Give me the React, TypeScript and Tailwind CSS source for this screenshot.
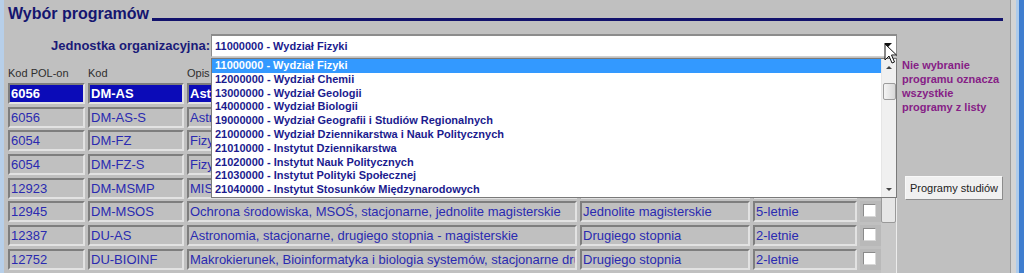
import React from "react";

type Row = { pol: string; kod: string; opis: string; typ: string; dl: string; sel?: boolean };

const rows: Row[] = [
  { pol: "6056", kod: "DM-AS", opis: "Astronomia, stacjonarne, jednolite magisterskie", typ: "Jednolite magisterskie", dl: "5-letnie", sel: true },
  { pol: "6056", kod: "DM-AS-S", opis: "Astronomia, stacjonarne, jednolite magisterskie, specjalność", typ: "Jednolite magisterskie", dl: "5-letnie" },
  { pol: "6054", kod: "DM-FZ", opis: "Fizyka, stacjonarne, jednolite magisterskie", typ: "Jednolite magisterskie", dl: "5-letnie" },
  { pol: "6054", kod: "DM-FZ-S", opis: "Fizyka, stacjonarne, jednolite magisterskie, specjalność", typ: "Jednolite magisterskie", dl: "5-letnie" },
  { pol: "12923", kod: "DM-MSMP", opis: "MISMaP, stacjonarne, jednolite magisterskie", typ: "Jednolite magisterskie", dl: "5-letnie" },
  { pol: "12945", kod: "DM-MSOS", opis: "Ochrona środowiska, MSOŚ, stacjonarne, jednolite magisterskie", typ: "Jednolite magisterskie", dl: "5-letnie" },
  { pol: "12387", kod: "DU-AS", opis: "Astronomia, stacjonarne, drugiego stopnia - magisterskie", typ: "Drugiego stopnia", dl: "2-letnie" },
  { pol: "12752", kod: "DU-BIOINF", opis: "Makrokierunek, Bioinformatyka i biologia systemów, stacjonarne drugiego stopnia", typ: "Drugiego stopnia", dl: "2-letnie" },
  { pol: "12753", kod: "DU-BIOL", opis: "Biologia, stacjonarne, drugiego stopnia", typ: "Drugiego stopnia", dl: "2-letnie" },
];

const options = [
  "11000000 - Wydział Fizyki",
  "12000000 - Wydział Chemii",
  "13000000 - Wydział Geologii",
  "14000000 - Wydział Biologii",
  "19000000 - Wydział Geografii i Studiów Regionalnych",
  "21000000 - Wydział Dziennikarstwa i Nauk Politycznych",
  "21010000 - Instytut Dziennikarstwa",
  "21020000 - Instytut Nauk Politycznych",
  "21030000 - Instytut Polityki Społecznej",
  "21040000 - Instytut Stosunków Międzynarodowych",
];

function Cell({ w, text, sel }: { w: string; text: string; sel?: boolean }) {
  return (
    <div
      className={`${w} h-full shrink-0 overflow-hidden whitespace-nowrap border-2 border-t-[#7e7e7e] border-l-[#7e7e7e] border-b-[#e2e2e2] border-r-[#e2e2e2] pl-[1px] text-[13px] leading-[17px] ${
        sel ? "bg-[#0b0bb8] font-bold text-white" : "bg-[#c0c0c0] text-[#2a2ab0]"
      }`}
    >
      {text}
    </div>
  );
}

export default function App() {
  return (
    <div className="flex h-[273px] w-[1024px] overflow-hidden bg-[#c0c0c0] font-['Liberation_Sans',Arial,sans-serif]">
      <div className="w-[4px] shrink-0 bg-[#b7cfe9]" />
      <div className="flex min-w-0 flex-1 flex-col">
        {/* title */}
        <div className="flex h-[20px] items-end pl-[4px] pr-[7px] mt-[4px]">
          <div className="text-[16px] font-bold leading-[20px] text-[#15156f] whitespace-nowrap">Wybór programów</div>
          <div className="ml-[3px] mb-[3px] h-[3px] flex-1 bg-[#12126c]" />
        </div>
        <div className="mt-[10px] flex flex-1">
          {/* left column */}
          <div className="flex w-[893px] shrink-0 flex-col">
            <div className="flex h-[23px]">
              <div className="w-[207px] shrink-0 pr-[1px] text-right text-[13px] font-bold leading-[23px] text-[#1a1a78]">
                Jednostka organizacyjna:
              </div>
              <div className="relative flex-1">
                <div className="h-[23px] border border-t-2 border-[#8c8c8c] border-b-[#d0d0d0] bg-white pl-[3px] text-[11px] font-bold leading-[20px] text-[#1b1b8e]">
                  11000000 - Wydział Fizyki
                </div>
                <div className="absolute left-[673px] top-[9px] h-0 w-0 border-x-[4px] border-t-[4px] border-x-transparent border-t-[#111]" />
                {/* dropdown list */}
                <div className="absolute left-0 right-0 top-[24px] z-10 flex h-[140px] border border-[#7a7a7a] bg-white">
                  <div className="flex flex-1 flex-col">
                    {options.map((o, i) => (
                      <div
                        key={o}
                        className={`h-[13.8px] whitespace-nowrap pl-[3px] text-[11px] font-bold leading-[13.8px] ${
                          i === 0 ? "bg-[#3399ff] text-white" : "text-[#1b1b8e]"
                        }`}
                      >
                        {o}
                      </div>
                    ))}
                  </div>
                  <div className="flex w-[15px] flex-col items-center border-l border-[#e6e6e6] bg-[#f0f0f0]">
                    <div className="flex h-[16px] items-center justify-center">
                      <div className="h-0 w-0 border-x-[3px] border-b-[3px] border-x-transparent border-b-[#444]" />
                    </div>
                    <div className="mt-[8px] h-[17px] w-[13px] rounded-[2px] border border-[#9c9c9c] bg-gradient-to-r from-[#f4f4f4] to-[#d8d8d8]" />
                    <div className="flex-1" />
                    <div className="flex h-[16px] items-center justify-center">
                      <div className="h-0 w-0 border-x-[3px] border-t-[3px] border-x-transparent border-t-[#444]" />
                    </div>
                  </div>
                </div>
                {/* mouse cursor */}
                <svg className="absolute left-[673px] top-[9px] z-20" width="14" height="22" viewBox="0 0 14 22">
                  <path d="M1 1 L1 17 L5 13 L8 20 L10.5 19 L7.5 12 L12.5 12 Z" fill="#fff" stroke="#111" strokeWidth="1" strokeLinejoin="round" />
                </svg>
              </div>
            </div>
            {/* table */}
            <div className="mt-[9px] flex flex-1 overflow-hidden">
              <div className="flex-1 overflow-hidden pl-[4px]">
                <div className="mb-[3px] flex h-[14px] gap-[3px] text-[11px] leading-[14px] text-[#2e2e2e]">
                  <div className="w-[77px] shrink-0">Kod POL-on</div>
                  <div className="w-[96px] shrink-0">Kod</div>
                  <div className="w-[390px] shrink-0">Opis</div>
                </div>
                <div className="flex flex-col gap-[2.7px]">
                  {rows.map((r, i) => (
                    <div key={i} className="flex h-[21px] gap-[3px]">
                      <Cell w="w-[77px]" text={r.pol} sel={r.sel} />
                      <Cell w="w-[96px]" text={r.kod} sel={r.sel} />
                      <Cell w="w-[390px]" text={r.opis} sel={r.sel} />
                      <Cell w="w-[170px]" text={r.typ} sel={r.sel} />
                      <Cell w="w-[104px]" text={r.dl} sel={r.sel} />
                      <div className="h-full w-[21px] shrink-0 bg-[#b9b9b9] pl-[3px] pt-[3px]">
                        <div className="h-[13px] w-[13px] border border-t-[#8a8a8a] border-l-[#8a8a8a] border-b-[#d8d8d8] border-r-[#d8d8d8] bg-white" />
                      </div>
                    </div>
                  ))}
                </div>
              </div>
              <div className="flex w-[16px] shrink-0 flex-col border-r border-[#ececec] bg-[#c8c8c8]">
                <div className="h-[157px] rounded-[2px] border border-[#999] bg-[#e6e6e6]" />
              </div>
            </div>
          </div>
          {/* right column */}
          <div className="flex-1 pl-[5px] pt-[24px]">
            <div className="whitespace-nowrap text-[11px] font-bold leading-[14px] text-[#862086]">
              Nie wybranie
              <br />
              programu oznacza
              <br />
              wszystkie
              <br />
              programy z listy
            </div>
            <button className="ml-[3px] mt-[62px] h-[24px] w-[98px] border border-[#f8f8f8] border-b-[#8c8c8c] border-r-[#8c8c8c] bg-[#f0f0f0] text-[11px] leading-[20px] text-[#222]">
              Programy studiów
            </button>
          </div>
        </div>
      </div>
      <div className="flex shrink-0">
        <div className="w-[1px] bg-[#9c9c9c]" />
        <div className="w-[5px] bg-[#d4d4d4]" />
        <div className="w-[3px] bg-[#aecbeb]" />
        <div className="w-[5px] bg-[#3f7ecf]" />
      </div>
    </div>
  );
}
